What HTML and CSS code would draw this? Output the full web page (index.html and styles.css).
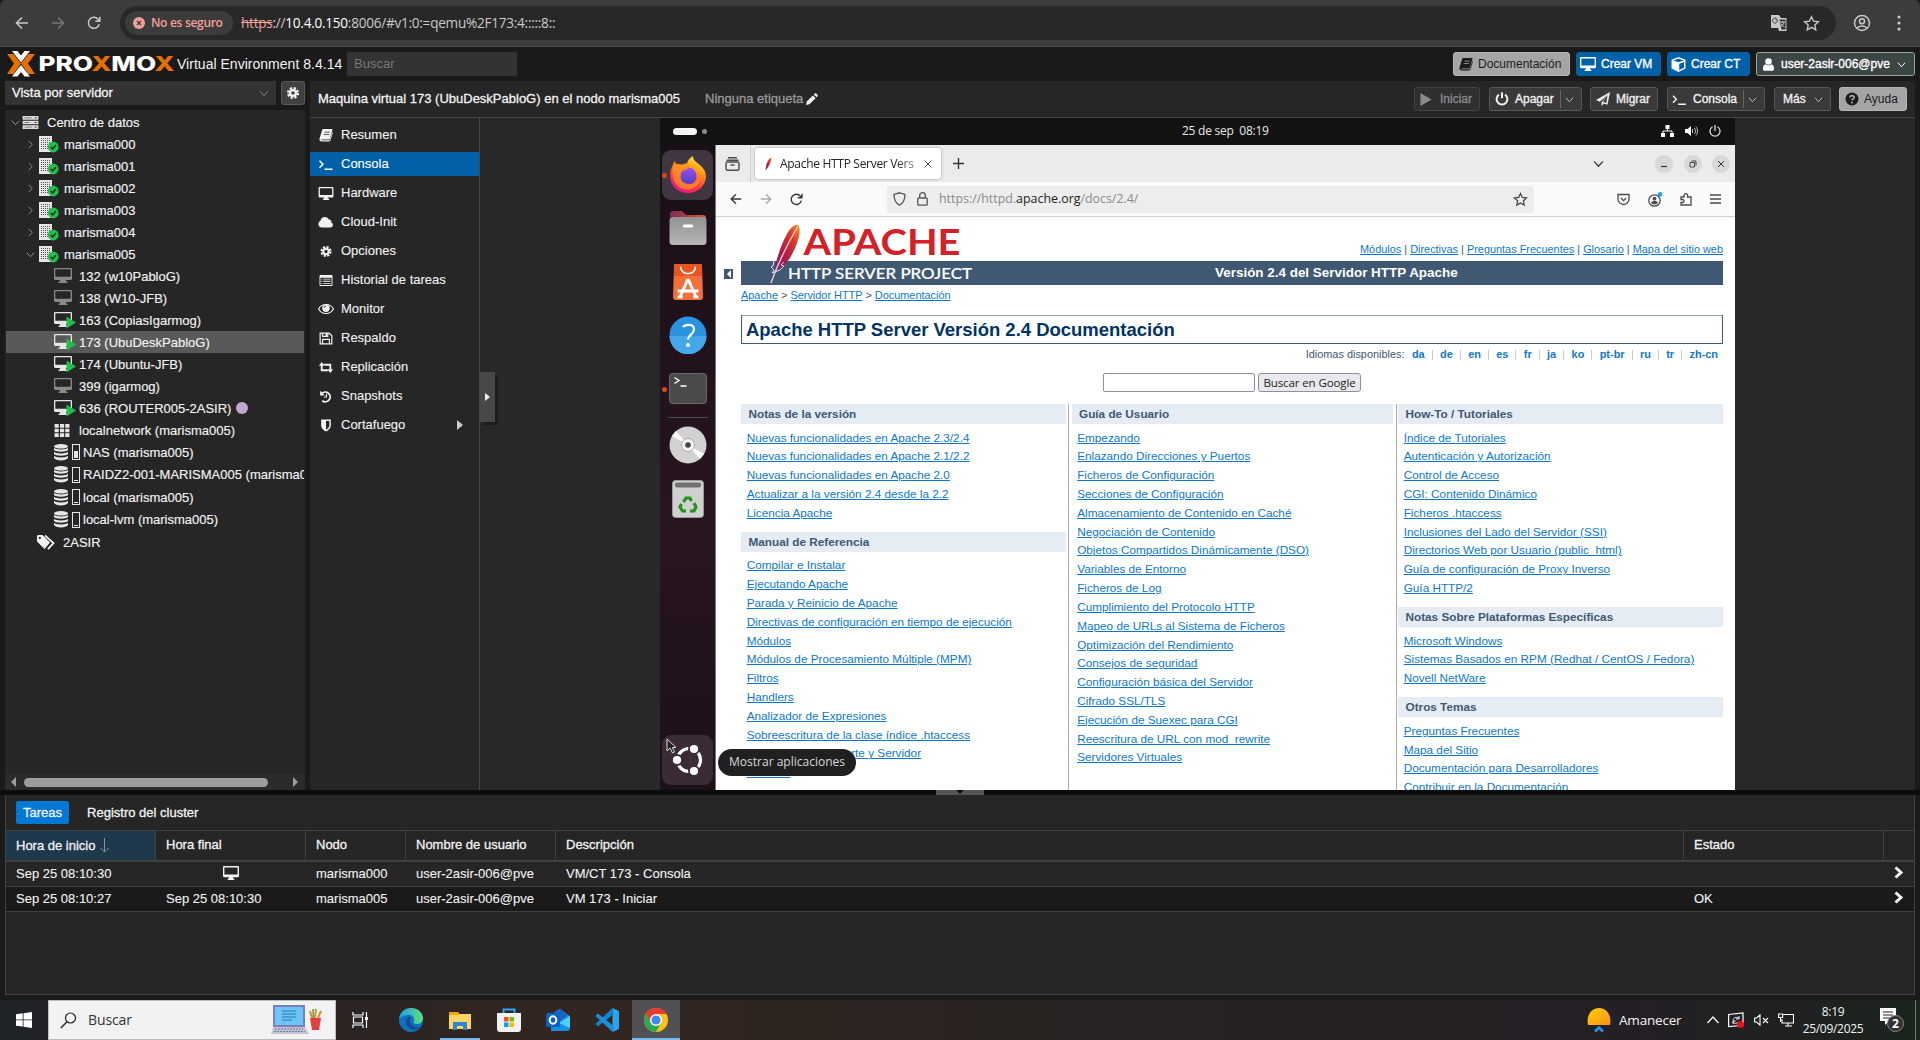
FILE: index.html
```html
<!DOCTYPE html>
<html lang="es">
<head>
<meta charset="utf-8">
<title>Proxmox Virtual Environment</title>
<link rel="stylesheet" href="styles.css">
</head>
<body>
<svg class="defs" width="0" height="0">
  <defs>
    <linearGradient id="gFox" x1="0.8" y1="0" x2="0.3" y2="1"><stop offset="0" stop-color="#fff44f"/><stop offset=".35" stop-color="#ff980e"/><stop offset=".7" stop-color="#ff3647"/><stop offset="1" stop-color="#e31587"/></linearGradient>
    <linearGradient id="gGlobe" x1="0" y1="0" x2="0" y2="1"><stop offset="0" stop-color="#a04bf0"/><stop offset="1" stop-color="#4b3fc0"/></linearGradient>
    <linearGradient id="gFolder" x1="0" y1="0" x2="1" y2="0"><stop offset="0" stop-color="#7a2a58"/><stop offset="1" stop-color="#e2572b"/></linearGradient>
    <linearGradient id="gGrey" x1="0" y1="0" x2="0" y2="1"><stop offset="0" stop-color="#929292"/><stop offset="1" stop-color="#b6b6b6"/></linearGradient>
    <linearGradient id="gFeather" x1="1" y1="0" x2="0" y2="1"><stop offset="0" stop-color="#f79a23"/><stop offset=".3" stop-color="#d9382b"/><stop offset=".65" stop-color="#b01a44"/><stop offset="1" stop-color="#6d2a7f"/></linearGradient>
    <linearGradient id="gSun" x1="0" y1="0" x2="1" y2="1"><stop offset="0" stop-color="#ffd000"/><stop offset="1" stop-color="#f7921e"/></linearGradient>
    <linearGradient id="gEdge" x1="0" y1="0" x2="1" y2="0"><stop offset="0" stop-color="#1e9be8"/><stop offset="1" stop-color="#5fe07a"/></linearGradient>
  </defs>
  <symbol id="back" viewBox="0 0 16 16"><path d="M14 8H3M8 2.5 2.5 8 8 13.5" fill="none" stroke="currentColor" stroke-width="1.6"/></symbol>
  <symbol id="fwd" viewBox="0 0 16 16"><path d="M2 8h11M8 2.5 13.5 8 8 13.5" fill="none" stroke="currentColor" stroke-width="1.6"/></symbol>
  <symbol id="reload" viewBox="0 0 16 16"><path d="M13.2 9.2A5.5 5.5 0 1 1 12 4.2l1.5 1.6M13.8 1.8v4.4H9.4" fill="none" stroke="currentColor" stroke-width="1.5"/></symbol>
  <symbol id="star" viewBox="0 0 16 16"><path d="m8 1.6 1.9 4.2 4.6.5-3.4 3.1.9 4.5L8 11.600l-4 2.300.9-4.500L1.500 6.300l4.600-.5z" fill="none" stroke="currentColor" stroke-width="1.300"/></symbol>
  <symbol id="chev" viewBox="0 0 10 10"><path d="m1 3 4 4.500L9 3" fill="none" stroke="currentColor" stroke-width="1.100"/></symbol>
  <symbol id="chevr" viewBox="0 0 10 10"><path d="m3 1 4 4-4 4" fill="none" stroke="currentColor" stroke-width="1"/></symbol>
  <symbol id="gear" viewBox="0 0 14 14"><path d="M7 2.900a4.100 4.100 0 1 0 0 8.200 4.100 4.100 0 0 0 0-8.200zm0 2.300a1.800 1.800 0 1 1 0 3.600 1.800 1.800 0 0 1 0-3.600z" fill="currentColor" fill-rule="evenodd"/><circle cx="7" cy="7" r="4.900" fill="none" stroke="currentColor" stroke-width="2.200" stroke-dasharray="2.300 1.548"/></symbol>
  <symbol id="book" viewBox="0 0 14 14"><path d="M4.300 1h8.500c.5 0 .8.500.6 1L11 10.500c-.2.600-.6.900-1.200.9H2.500c-.4 0-.3.900.2.900h7.600c.3 0 .5-.1.600-.4l2.400-7.800c.5.300.5.700.4 1.100l-2.200 7.100c-.2.700-.8 1.100-1.500 1.100H2.300C1 13.400 0 12 .5 10.800L3 2.200C3.200 1.400 3.600 1 4.300 1zm1.300 2.700-.3.900h5.500l.3-.9zm-.7 2.200-.3.900h5.500l.3-.9z" fill="currentColor" fill-rule="evenodd"/></symbol>
  <symbol id="term" viewBox="0 0 16 14"><path d="m1 3 3.600 3.700L1 10.400M6.500 12H15" fill="none" stroke="currentColor" stroke-width="1.600"/></symbol>
  <symbol id="desk" viewBox="0 0 16 14"><path d="M1.200 0h13.600C15.500 0 16 .5 16 1.200v8.900c0 .7-.5 1.200-1.200 1.200H10v1.200h1.300V14H4.700v-1.500H6v-1.200H1.200C.5 11.300 0 10.800 0 10.100V1.200C0 .5.500 0 1.200 0zM1.400 1.400v7.200h13.200V1.400z" fill="currentColor" fill-rule="evenodd"/></symbol>
  <symbol id="cloud" viewBox="0 0 16 14"><path d="M4 12.500a3.500 3.500 0 0 1-1.500-6.700A4.500 4.500 0 0 1 11 4.500c2 0 2.600 1.500 2.300 2.900A2.700 2.700 0 0 1 13 12.500z" fill="currentColor"/></symbol>
  <symbol id="list" viewBox="0 0 14 14"><path d="M1.200 1h11.600c.7 0 1.200.5 1.200 1.200v9.600c0 .7-.5 1.200-1.200 1.200H1.200C.5 13 0 12.500 0 11.800V2.200C0 1.500.5 1 1.200 1zM1 4v7.900h12V4zm1 1h1v1H2zm2 0h8v1H4zM2 7.300h1v1H2zm2 0h8v1H4zM2 9.600h1v1H2zm2 0h8v1H4z" fill="currentColor" fill-rule="evenodd"/></symbol>
  <symbol id="eye" viewBox="0 0 16 12"><path d="M.5 6C2 3.300 4.800 1.500 8 1.500S14 3.300 15.500 6C14 8.700 11.200 10.500 8 10.500S2 8.700.5 6z" fill="none" stroke="currentColor" stroke-width="1.200"/><circle cx="8" cy="5.300" r="3.700" fill="currentColor"/><path d="M6 5a2 2 0 0 1 2-2" fill="none" stroke="#262626" stroke-width=".8"/></symbol>
  <symbol id="save" viewBox="0 0 14 14"><path d="M.7 1.200v11.600h12.600V4L10.500 1.200zM3.300 1.200v3.600H9V1.200M3.300 12.800V8h7.400v4.800" fill="none" stroke="currentColor" stroke-width="1.300"/><path d="M6.500 1.500h1.800v2.800H6.500z" fill="currentColor"/></symbol>
  <symbol id="retweet" viewBox="0 0 16 12"><path d="M3.300 0 6.400 4H4.300v4h5l1.600 2H2.300V4H.2zM12.700 12l3.100-4h-2.100V2H5.100l1.600 2h5v4H9.600z" fill="currentColor"/></symbol>
  <symbol id="undo" viewBox="0 0 14 14"><path d="M2.500 3.800A5.200 5.200 0 1 1 3 11.500" fill="none" stroke="currentColor" stroke-width="2"/><path d="M.7.800v5h5z" fill="currentColor"/><path d="M7.500 4v3.500H5" fill="none" stroke="currentColor" stroke-width="1.200"/></symbol>
  <symbol id="shield" viewBox="0 0 12 14"><path d="M.8.500h10.400V7c0 3.200-2.600 5-5.200 6.500C3.400 12 .8 10.200.8 7zM6 2.200v9.300c2-1.300 3.600-2.600 3.600-4.500V2.200z" fill="currentColor" fill-rule="evenodd"/></symbol>
  <symbol id="play" viewBox="0 0 12 14"><path d="M0 0v14l12-7z" fill="currentColor"/></symbol>
  <symbol id="power" viewBox="0 0 14 14"><path d="M4 2.600a5.400 5.400 0 1 0 6 0M7 .3v6" fill="none" stroke="currentColor" stroke-width="2"/></symbol>
  <symbol id="plane" viewBox="0 0 14 14"><path d="M14 0 0 8l3.800 1.800L12 2.500 5.500 10.500V14l2.300-2.500 3.700 1.300zM11.500 3.500 10.300 11 7 9.700z" fill="currentColor" fill-rule="evenodd"/></symbol>
  <symbol id="quest" viewBox="0 0 14 14"><circle cx="7" cy="7" r="6.500" fill="currentColor"/><path d="M5 5.500c0-2.700 4.200-2.500 4.200-.2C9.200 7 7 6.800 7 8.600M7 9.800v1.700" fill="none" stroke="#a5a5a5" stroke-width="1.700"/></symbol>
  <symbol id="cube" viewBox="0 0 14 14"><path d="m7 0 6.500 2.500v8.300L7 14 .5 10.800V2.500zm0 1.300L2.200 3.200 7 5l4.800-1.800zm.7 5v5.900l4.500-2.200V4.600z" fill="currentColor" fill-rule="evenodd"/></symbol>
  <symbol id="user" viewBox="0 0 12 14"><circle cx="6" cy="3.800" r="3.600" fill="currentColor"/><path d="M0 11.500C0 8.500 1.200 7 2.700 6.600c2 1.800 4.600 1.800 6.600 0C10.800 7 12 8.500 12 11.500c0 1.500-.8 2.300-2 2.300H2c-1.200 0-2-.8-2-2.300z" fill="currentColor"/></symbol>
  <symbol id="server" viewBox="0 0 17 14"><path d="M0 0h17v4H0zM0 5h17v4H0zM0 10h17v4H0z" fill="#dcdcdc"/><path d="M2 2h8M2 7h5M2 12h8" stroke="#777" stroke-width="1"/><path d="M13 2h2M13 7h2M13 12h2" stroke="#222" stroke-width="1"/></symbol>
  <symbol id="node" viewBox="0 0 20 17"><path d="M0 0h13v16H0z" fill="#e6e6e6"/><path d="M2.500 2v11M4.500 2v11M6.500 2v11M8.500 2v11M10.500 2v11" stroke="#555" stroke-width="1" stroke-dasharray="1 1"/><circle cx="14.200" cy="11" r="5.400" fill="#21bf4b"/><path d="m11.700 11 2 2 3.200-4" fill="none" stroke="#262626" stroke-width="1.500"/></symbol>
  <symbol id="vm" viewBox="0 0 22 16"><path d="M1.200 0h15.600C17.500 0 18 .5 18 1.200v9.600c0 .7-.5 1.200-1.200 1.200H12v1.500h1.500V15h-9v-1.500H6V12H1.200C.5 12 0 11.500 0 10.800V1.200C0 .5.500 0 1.200 0zM1.300 1.300v7.500h15.400V1.300z" fill="currentColor" fill-rule="evenodd"/></symbol>
  <symbol id="vmrun" viewBox="0 0 22 17"><use href="#vm" width="22" height="16"/><path d="M12.500 4.500v12L22 10.500z" fill="#21bf4b"/></symbol>
  <symbol id="grid" viewBox="0 0 16 14"><path d="M0 0h4.500v4H0zM5.800 0h4.500v4H5.800zM11.500 0H16v4h-4.500zM0 5h4.500v4H0zM5.800 5h4.500v4H5.800zM11.500 5H16v4h-4.500zM0 10h4.500v4H0zM5.800 10h4.500v4H5.800zM11.500 10H16v4h-4.500z" fill="currentColor"/></symbol>
  <symbol id="db" viewBox="0 0 14 17"><g fill="currentColor"><ellipse cx="7" cy="2.300" rx="7" ry="2.300"/><path d="M0 3.700c1.500 2.300 12.500 2.300 14 0v2.200c-1.500 2.300-12.500 2.300-14 0zM0 7.700c1.500 2.300 12.500 2.300 14 0v2.200c-1.500 2.300-12.500 2.300-14 0zM0 11.700c1.500 2.300 12.500 2.300 14 0v2.400c-1.500 3.300-12.500 3.300-14 0z"/></g></symbol>
  <symbol id="tags" viewBox="0 0 18 15"><path d="M1 0h4.500L13 7.500 7.500 14 0 6.500V1zM2.800 1.800a1.100 1.100 0 1 0 .1 0z" fill="currentColor" fill-rule="evenodd"/><path d="M8 .5 16.500 8l-5.500 6.200" fill="none" stroke="currentColor" stroke-width="1.800"/></symbol>
  <symbol id="pencil" viewBox="0 0 14 14"><path d="m0 14 .8-4L8 2.800 11.200 6 4 13.200zM9 1.800 10.300.6c.5-.5 1.100-.5 1.600 0l1.500 1.500c.5.500.5 1.100 0 1.600L12.200 5z" fill="currentColor"/></symbol>
  <symbol id="more" viewBox="0 0 10 14"><path d="m1.500 1.500 5.500 5-5.500 5" fill="none" stroke="currentColor" stroke-width="3"/></symbol>
</svg>

<header class="chrome">
  <svg class="nav nav-back"><use href="#back"/></svg>
  <svg class="nav nav-fwd"><use href="#fwd"/></svg>
  <svg class="nav nav-reload"><use href="#reload"/></svg>
  <div class="omnibox">
    <span class="unsafe"><svg viewBox="0 0 12 12" width="12" height="12"><circle cx="6" cy="6" r="6" fill="#f0a199"/><path d="m4 4 4 4M8 4 4 8" stroke="#3c3c3c" stroke-width="1.400"/></svg><b>No es seguro</b></span>
    <span class="url"><s>https</s>://<em>10.4.0.150</em>:8006/#v1:0:=qemu%2F173:4:::::8::</span>
    <svg class="translate" viewBox="0 0 18 18" width="18" height="18"><path d="M1 1h8l2 3h5.500v13H9l-1-3H1z" fill="#c8c8c8"/><path d="M9.500 5.500h6v10h-4z" fill="#333"/><path d="M7.500 6H5.500M7.500 6.500a2.500 2.500 0 1 1-.8-1.800" fill="none" stroke="#333" stroke-width="1"/><path d="M10 8h5M12.500 7v1.500M11 9.500c1 2 2 3 3.500 3.500M14 8.500c-.5 2-2 3.500-3 4" fill="none" stroke="#ddd" stroke-width=".9"/></svg>
    <svg class="bookmark"><use href="#star"/></svg>
  </div>
  <svg class="profile" viewBox="0 0 18 18" width="18" height="18" fill="none" stroke="#c8c8c8" stroke-width="1.500"><circle cx="9" cy="9" r="7.500"/><circle cx="9" cy="7.300" r="2.500"/><path d="M4 14.200c2-3 8-3 10 0"/></svg>
  <svg viewBox="0 0 4 16" width="4" height="16" fill="#d0d0d0"><circle cx="2" cy="2" r="1.500"/><circle cx="2" cy="8" r="1.500"/><circle cx="2" cy="14" r="1.500"/></svg>
</header>

<div class="pve">
  <div class="topbar">
    <svg class="logo" width="168" height="28" viewBox="0 0 168 28">
      <path d="M1 4h6.500L15 13.500 7.500 24H1l7-10.500z" fill="#e57000"/><path d="M29 4h-6.500L15 13.500l7.500 10.500H29l-7-10.500z" fill="#e57000"/>
      <path d="M6 1h5.500l3.500 4.500L18.500 1H24l-9 11.500zM6 26.500h5.500L15 22l3.500 4.500H24L15 15z" fill="#fff"/>
      <text x="32.500" y="20.500" textLength="136" lengthAdjust="spacingAndGlyphs" class="brand">PRO<tspan class="or">X</tspan>MO<tspan class="or">X</tspan></text>
    </svg>
    <span class="version">Virtual Environment 8.4.14</span>
    <span class="search">Buscar</span>
    <span class="grow"></span>
    <div class="topbtns">
      <span class="btn light w117"><svg width="14" height="14"><use href="#book"/></svg>Documentación</span>
      <span class="btn blue w85"><svg width="16" height="14"><use href="#desk"/></svg>Crear VM</span>
      <span class="btn blue w83"><svg width="15" height="15"><use href="#cube"/></svg>Crear CT</span>
      <span class="btn userb"><svg width="11" height="13"><use href="#user"/></svg>user-2asir-006@pve<svg width="9" height="9"><use href="#chev"/></svg></span>
    </div>
  </div>

  <div class="main">
    <aside class="left">
      <div class="viewrow"><span class="combo">Vista por servidor<svg width="10" height="10"><use href="#chev"/></svg></span><span class="gearbtn"><svg width="14" height="14"><use href="#gear"/></svg></span></div>
      <div class="tree">
        <div class="tr l0"><svg class="ar" width="9" height="9"><use href="#chev"/></svg><svg width="17" height="13"><use href="#server"/></svg><span>Centro de datos</span></div>
        <div class="tr l1"><svg class="ar" width="9" height="9"><use href="#chevr"/></svg><svg width="20" height="17"><use href="#node"/></svg><span>marisma000</span></div>
        <div class="tr l1"><svg class="ar" width="9" height="9"><use href="#chevr"/></svg><svg width="20" height="17"><use href="#node"/></svg><span>marisma001</span></div>
        <div class="tr l1"><svg class="ar" width="9" height="9"><use href="#chevr"/></svg><svg width="20" height="17"><use href="#node"/></svg><span>marisma002</span></div>
        <div class="tr l1"><svg class="ar" width="9" height="9"><use href="#chevr"/></svg><svg width="20" height="17"><use href="#node"/></svg><span>marisma003</span></div>
        <div class="tr l1"><svg class="ar" width="9" height="9"><use href="#chevr"/></svg><svg width="20" height="17"><use href="#node"/></svg><span>marisma004</span></div>
        <div class="tr l1"><svg class="ar" width="9" height="9"><use href="#chev"/></svg><svg width="20" height="17"><use href="#node"/></svg><span>marisma005</span></div>
        <div class="tr l2"><svg class="off" width="22" height="16"><use href="#vm"/></svg><span>132 (w10PabloG)</span></div>
        <div class="tr l2"><svg class="off" width="22" height="16"><use href="#vm"/></svg><span>138 (W10-JFB)</span></div>
        <div class="tr l2"><svg width="22" height="17"><use href="#vmrun"/></svg><span>163 (CopiasIgarmog)</span></div>
        <div class="tr l2 sel"><svg width="22" height="17"><use href="#vmrun"/></svg><span>173 (UbuDeskPabloG)</span></div>
        <div class="tr l2"><svg width="22" height="17"><use href="#vmrun"/></svg><span>174 (Ubuntu-JFB)</span></div>
        <div class="tr l2"><svg class="off" width="22" height="16"><use href="#vm"/></svg><span>399 (igarmog)</span></div>
        <div class="tr l2"><svg width="22" height="17"><use href="#vmrun"/></svg><span>636 (ROUTER005-2ASIR)</span><i class="tag"></i></div>
        <div class="tr l2"><svg class="net" width="16" height="13"><use href="#grid"/></svg><span>localnetwork (marisma005)</span></div>
        <div class="tr l2 st"><svg width="14" height="17"><use href="#db"/></svg><i class="usage half"></i><span>NAS (marisma005)</span></div>
        <div class="tr l2 st"><svg width="14" height="17"><use href="#db"/></svg><i class="usage"></i><span>RAIDZ2-001-MARISMA005 (marisma005)</span></div>
        <div class="tr l2 st"><svg width="14" height="17"><use href="#db"/></svg><i class="usage"></i><span>local (marisma005)</span></div>
        <div class="tr l2 st"><svg width="14" height="17"><use href="#db"/></svg><i class="usage"></i><span>local-lvm (marisma005)</span></div>
        <div class="tr pool"><svg width="18" height="15"><use href="#tags"/></svg><span>2ASIR</span></div>
        <div class="hscroll"><i class="sl"></i><i class="thumb"></i><i class="sr"></i></div>
      </div>
    </aside>

    <section class="content">
      <div class="titlebar">
        <span class="ttl">Maquina virtual 173 (UbuDeskPabloG) en el nodo marisma005</span>
        <span class="notag">Ninguna etiqueta<svg width="12" height="12"><use href="#pencil"/></svg></span>
        <span class="grow"></span>
        <div class="actions">
          <span class="btn dark dis w66 g9"><svg width="12" height="13"><use href="#play"/></svg>Iniciar</span>
          <span class="btn dark w93 g8"><svg width="14" height="14"><use href="#power"/></svg>Apagar<i class="vs"></i><svg class="dd" width="9" height="9"><use href="#chev"/></svg></span>
          <span class="btn dark w68 g9"><svg width="14" height="14"><use href="#plane"/></svg>Migrar</span>
          <span class="btn dark w98 g9"><svg width="15" height="13"><use href="#term"/></svg>Consola<i class="vs"></i><svg class="dd" width="9" height="9"><use href="#chev"/></svg></span>
          <span class="btn dark w57 g8">Más<svg class="dd" width="9" height="9"><use href="#chev"/></svg></span>
          <span class="btn light w68"><svg width="14" height="14"><use href="#quest"/></svg>Ayuda</span>
        </div>
      </div>
      <div class="body">
        <nav class="side">
          <a><svg width="14" height="14"><use href="#book"/></svg>Resumen</a>
          <a class="on"><svg width="15" height="13"><use href="#term"/></svg>Consola</a>
          <a><svg width="16" height="13"><use href="#desk"/></svg>Hardware</a>
          <a><svg width="16" height="14"><use href="#cloud"/></svg>Cloud-Init</a>
          <a><svg width="13" height="13"><use href="#gear"/></svg>Opciones</a>
          <a><svg width="14" height="13"><use href="#list"/></svg>Historial de tareas</a>
          <a><svg width="15" height="12"><use href="#eye"/></svg>Monitor</a>
          <a><svg width="13" height="13"><use href="#save"/></svg>Respaldo</a>
          <a><svg width="16" height="11"><use href="#retweet"/></svg>Replicación</a>
          <a><svg width="13" height="13"><use href="#undo"/></svg>Snapshots</a>
          <a><svg width="12" height="13"><use href="#shield"/></svg>Cortafuego<i class="sub"></i></a>
        </nav>
        <div class="console">
          <div class="handle"><i></i></div>
          <div class="vm">
            <div class="gnome"><i class="ws"></i><i class="ws2"></i><span class="clock">25 de sep&nbsp; 08:19</span>
              <span class="sys">
                <svg width="13" height="12" viewBox="0 0 13 12"><path d="M4.500 0h4v4h-4zM0 8h4v4H0zM9 8h4v4H9z" fill="#fff"/><path d="M6.500 4v2M2 8V6h9v2" fill="none" stroke="#fff"/></svg>
                <svg width="13" height="12" viewBox="0 0 13 12"><path d="M0 4h2.500L6 1v10L2.500 8H0z" fill="#fff"/><path d="M7.500 4v4M9.500 3c1.300 2 1.300 4 0 6M11 1.500c2 3 2 6 0 9" fill="none" stroke="#bbb"/></svg>
                <svg width="12" height="12" viewBox="0 0 12 12"><path d="M3.500 1.800a5 5 0 1 0 5 0M6 0v6" fill="none" stroke="#ddd" stroke-width="1.300"/></svg>
              </span>
            </div>
            <div class="desktop">
              <div class="dock">
                <div class="app active"><i class="run"></i><svg width="38" height="38" viewBox="0 0 38 38"><path d="M19 37C9 37 1 30 1 19c0-4 1-7 3-10 0-2 1-3 2-4 0 2 1 3 2 3l5 .500c2-1 4-1.200 5-1C18.500 4 21 2 24 0c0 4 2 5 5 7.500C33 11 37 14 37 21 36 31 28 37 19 37z" fill="url(#gFox)"/><circle cx="19" cy="20" r="8.500" fill="url(#gGlobe)"/><path d="M4 9c2-1 5-1 9 .5 2 1 4 0 6 1 1 2-1 3.500-4 4-2 1-3 1.500-3 4-2 7 5 11 12 9 4-1 6-5 6-9 3 8-3 15-11 15C9 34 1 25 4 9z" fill="#ff9a1e" opacity=".7"/></svg></div>
                <div class="app"><svg width="38" height="34" viewBox="0 0 38 34"><path d="M1 3c0-2 1-3 3-3h9l4 4h17c2 0 3 1 3 3v8H1z" fill="url(#gFolder)"/><rect x=".5" y="6" width="37" height="28" rx="3.500" fill="url(#gGrey)"/><rect x="14" y="13.500" width="10" height="3" rx="1" fill="#fff"/></svg></div>
                <div class="app"><svg width="30" height="36" viewBox="0 0 30 36"><path d="M3 0h24c1.500 0 2 .5 2 2l1 31c0 2-1 3-3 3H3c-2 0-3-1-3-3L1 2c0-1.500.5-2 2-2z" fill="#f4703a"/><path d="M1 0h28v12H1z" fill="#e95420"/><path d="M7.500 2.500c0 9.500 15 9.500 15 0" fill="none" stroke="#fff" stroke-width="1.600"/><path d="M15 15 7 33M15 15l8 18M4.500 27h21" fill="none" stroke="#fff" stroke-width="3"/><path d="M4.500 33h5M20.500 33h5" stroke="#fff" stroke-width="2.500"/></svg></div>
                <div class="app"><svg width="38" height="38" viewBox="0 0 38 38"><circle cx="19" cy="19" r="18.500" fill="#2a93df"/><path d="M.5 20h37a18.500 18.500 0 0 1-37 0z" fill="#43a8ea"/><path d="M14 11c2-3 11-3.500 11 2.500 0 5-6 5-6 10" fill="none" stroke="#fff" stroke-width="2.300"/><circle cx="19" cy="29" r="2" fill="#fff"/></svg></div>
                <div class="app"><i class="run"></i><svg width="38" height="31" viewBox="0 0 38 31"><rect x=".5" y=".5" width="37" height="30" rx="3" fill="#4a4a4a" stroke="#6a6a6a"/><path d="m5.500 4.500 4.500 3-4.500 3M11.500 13h6" fill="none" stroke="#fff" stroke-width="1.400"/></svg></div>
                <i class="dsep"></i>
                <div class="app"><svg width="38" height="38" viewBox="0 0 38 38"><circle cx="19" cy="19" r="18.500" fill="#d2d2d2"/><path d="M19 19 3 10l4-5zM19 19l16 9-4 5z" fill="#fff"/><circle cx="19" cy="19" r="6.500" fill="#f4f4f4" stroke="#b5a88d"/><circle cx="19" cy="19" r="2.800" fill="#444"/></svg></div>
                <div class="app"><svg width="32" height="38" viewBox="0 0 32 38"><rect x=".5" y=".5" width="31" height="37" rx="3" fill="#d0d0d0" stroke="#999"/><rect x="3" y="2.500" width="26" height="5" rx="2" fill="#707070"/><g fill="none" stroke="#26921d" stroke-width="3.200"><path d="m11.500 22 2.500-4h4l1.500 3"/><path d="m22 23 2 4-2 4h-4"/><path d="M14 31h-3.500L8 27l1.500-3"/></g></svg></div>
                <div class="app ubuntu"><svg width="32" height="34" viewBox="0 0 32 34"><circle cx="17" cy="17" r="11.500" fill="none" stroke="#fff" stroke-width="3.200"/><g fill="#fff" stroke="#3a2b35" stroke-width="1.800"><circle cx="5" cy="17" r="5"/><circle cx="22" cy="6" r="5"/><circle cx="22" cy="28" r="5"/></g></svg></div>
                <svg class="cursor" width="11" height="16" viewBox="0 0 11 16"><path d="M1 1v12l3-3 2.500 5 2-1L6.300 9.500H10z" fill="#222" stroke="#ddd" stroke-width="1"/></svg>
              </div>
              <div class="ff">
                <div class="tabs">
                  <span class="fview"><svg width="15" height="14" viewBox="0 0 15 14" fill="none" stroke="#4a4a4f" stroke-width="1.400"><path d="M3 .7h9M1.500 3.200h12"/><rect x="1" y="5" width="13" height="8.300" rx="1.500"/><path d="M5.500 8h4"/></svg></span>
                  <span class="tab"><svg width="7" height="14" viewBox="0 0 7 14"><path d="M6.500 0C2 3 1 8 .5 13.500 4 10 6 5 6.500 0z" fill="url(#gFeather)"/></svg><span class="tabt">Apache HTTP Server Vers</span><svg width="8" height="8" viewBox="0 0 8 8"><path d="m.5.500 7 7M7.500.500l-7 7" stroke="#444"/></svg></span>
                  <svg class="plus" width="11" height="11" viewBox="0 0 11 11"><path d="M5.500 0v11M0 5.500h11" stroke="#333" stroke-width="1.400"/></svg>
                  <span class="grow"></span>
                  <svg class="tabdd" width="11" height="11"><use href="#chev"/></svg>
                  <i class="wb"><svg width="8" height="8"><path d="M1 6.500h6" stroke="#333" stroke-width="1.200"/></svg></i><i class="wb"><svg width="8" height="8"><path d="M1 2.500h4.500V7H1zM2.500 1H7v4.500" fill="none" stroke="#444"/></svg></i><i class="wb"><svg width="8" height="8"><path d="m1 1 6 6M7 1 1 7" stroke="#333"/></svg></i>
                </div>
                <div class="tools">
                  <svg class="t1" width="14" height="14"><use href="#back"/></svg><svg class="t2" width="14" height="14"><use href="#fwd"/></svg><svg class="t3" width="15" height="15"><use href="#reload"/></svg>
                  <div class="furl"><svg width="13" height="14" viewBox="0 0 13 14"><path d="M6.500.8 12 2.500C12 8 10.500 11 6.500 13.200 2.500 11 1 8 1 2.500z" fill="none" stroke="#555" stroke-width="1.300"/></svg><svg width="11" height="14" viewBox="0 0 11 14" fill="none" stroke="#555" stroke-width="1.300"><rect x=".8" y="6" width="9.400" height="7.200" rx="1"/><path d="M2.700 6V3.500a2.800 2.800 0 0 1 5.600 0V6"/></svg><span>https://httpd.<em>apache.org</em>/docs/2.4/</span><span class="grow"></span><svg class="fst" width="15" height="15"><use href="#star"/></svg></div>
                  <span class="grow"></span>
                  <span class="tr4"><svg width="13" height="13" viewBox="0 0 13 13" fill="none" stroke="#4a4a4f" stroke-width="1.300"><path d="M1 1.500h11V6a5.500 5.500 0 0 1-11 0zM3.800 5l2.700 2.600L9.200 5"/></svg><svg width="14" height="15" viewBox="0 0 14 15"><circle cx="6.500" cy="8.500" r="5.700" fill="none" stroke="#4a4a4f" stroke-width="1.300"/><circle cx="6.500" cy="6.700" r="1.900" fill="#4a4a4f"/><path d="M3 10.500c1.500-2 5.500-2 7 0-1.500 2.500-5.500 2.500-7 0z" fill="#4a4a4f"/><circle cx="12" cy="2.300" r="2.300" fill="#0aa8f5"/></svg><svg width="12" height="14" viewBox="0 0 12 14"><path d="M1 5h3V3.500a1.800 1.800 0 0 1 3.600 0V5H11v8H1v-2.500h1.500a1.500 1.500 0 0 0 0-3H1z" fill="none" stroke="#4a4a4f" stroke-width="1.300"/></svg><svg width="11" height="10" viewBox="0 0 11 10"><path d="M0 1h11M0 5h11M0 9h11" stroke="#4a4a4f" stroke-width="1.300"/></svg></span>
                </div>
                <div class="page">
                  <i class="toggle"><b></b></i>
                  <div class="doc">
                    <div class="mods"><a>Módulos</a> | <a>Directivas</a> | <a>Preguntas Frecuentes</a> | <a>Glosario</a> | <a>Mapa del sitio web</a></div>
                    <div class="band">Versión 2.4 del Servidor HTTP Apache</div>
                    <svg class="alogo" width="240" height="62" viewBox="0 0 240 62">
                      <text class="ap1" x="33.500" y="32" textLength="157" lengthAdjust="spacingAndGlyphs">APACHE</text>
                      <text class="ap2" x="18" y="56" textLength="184" lengthAdjust="spacingAndGlyphs">HTTP SERVER PROJECT</text>
                      <path d="M28 2c-3-1-8 3-11 9C12 20 7 34 5 44l2 2h4c8-8 14-18 18-32 1-5 1-10-1-12z" fill="url(#gFeather)"/>
                      <path d="M28 3C18 20 8 40 1 60" fill="none" stroke="#f3ccd3" stroke-width="1.400"/>
                      <path d="m4 38-1 5-2 1 3 3-2 3 8-3 4-4-3-1 3-3" fill="none" stroke="#e9dcea" stroke-width="1"/>
                    </svg>
                    <div class="crumbs"><a>Apache</a> &gt; <a>Servidor HTTP</a> &gt; <a>Documentación</a></div>
                    <h1>Apache HTTP Server Versión 2.4 Documentación</h1>
                    <div class="langs">Idiomas disponibles: <b>da</b><i></i><b>de</b><i></i><b>en</b><i></i><b>es</b><i></i><b>fr</b><i></i><b>ja</b><i></i><b>ko</b><i></i><b>pt-br</b><i></i><b>ru</b><i></i><b>tr</b><i></i><b>zh-cn</b></div>
                    <div class="goog"><span class="gin"></span><span class="gbt">Buscar en Google</span></div>
                    <div class="cols">
                      <div class="col">
                        <h2>Notas de la versión</h2>
                        <ul><li><a>Nuevas funcionalidades en Apache 2.3/2.4</a></li><li><a>Nuevas funcionalidades en Apache 2.1/2.2</a></li><li><a>Nuevas funcionalidades en Apache 2.0</a></li><li><a>Actualizar a la versión 2.4 desde la 2.2</a></li><li><a>Licencia Apache</a></li></ul>
                        <h2>Manual de Referencia</h2>
                        <ul><li><a>Compilar e Instalar</a></li><li><a>Ejecutando Apache</a></li><li><a>Parada y Reinicio de Apache</a></li><li><a>Directivas de configuración en tiempo de ejecución</a></li><li><a>Módulos</a></li><li><a>Módulos de Procesamiento Múltiple (MPM)</a></li><li><a>Filtros</a></li><li><a>Handlers</a></li><li><a>Analizador de Expresiones</a></li><li><a>Sobreescritura de la clase índice .htaccess</a></li><li><a>Programas de Soporte y Servidor</a></li><li><a>Glosario</a></li></ul>
                      </div>
                      <div class="col mid">
                        <h2>Guía de Usuario</h2>
                        <ul><li><a>Empezando</a></li><li><a>Enlazando Direcciones y Puertos</a></li><li><a>Ficheros de Configuración</a></li><li><a>Secciones de Configuración</a></li><li><a>Almacenamiento de Contenido en Caché</a></li><li><a>Negociación de Contenido</a></li><li><a>Objetos Compartidos Dinámicamente (DSO)</a></li><li><a>Variables de Entorno</a></li><li><a>Ficheros de Log</a></li><li><a>Cumplimiento del Protocolo HTTP</a></li><li><a>Mapeo de URLs al Sistema de Ficheros</a></li><li><a>Optimización del Rendimiento</a></li><li><a>Consejos de seguridad</a></li><li><a>Configuración básica del Servidor</a></li><li><a>Cifrado SSL/TLS</a></li><li><a>Ejecución de Suexec para CGI</a></li><li><a>Reescritura de URL con mod_rewrite</a></li><li><a>Servidores Virtuales</a></li></ul>
                      </div>
                      <div class="col">
                        <h2>How-To / Tutoriales</h2>
                        <ul><li><a>Índice de Tutoriales</a></li><li><a>Autenticación y Autorización</a></li><li><a>Control de Acceso</a></li><li><a>CGI: Contenido Dinámico</a></li><li><a>Ficheros .htaccess</a></li><li><a>Inclusiones del Lado del Servidor (SSI)</a></li><li><a>Directorios Web por Usuario (public_html)</a></li><li><a>Guía de configuración de Proxy Inverso</a></li><li><a>Guía HTTP/2</a></li></ul>
                        <h2>Notas Sobre Plataformas Específicas</h2>
                        <ul><li><a>Microsoft Windows</a></li><li><a>Sistemas Basados en RPM (Redhat / CentOS / Fedora)</a></li><li><a>Novell NetWare</a></li></ul>
                        <h2>Otros Temas</h2>
                        <ul><li><a>Preguntas Frecuentes</a></li><li><a>Mapa del Sitio</a></li><li><a>Documentación para Desarrolladores</a></li><li><a>Contribuir en la Documentación</a></li></ul>
                      </div>
                    </div>
                  </div>
                  <div class="tip">Mostrar aplicaciones</div>
                </div>
              </div>
            </div>
          </div>
        </div>
      </div>
    </section>
  </div>

  <div class="split"><i class="grip"><b></b></i></div>

  <div class="log">
    <div class="ltabs"><span class="lt on">Tareas</span><span class="lt">Registro del cluster</span></div>
    <div class="lr head"><span class="sorted">Hora de inicio<svg width="9" height="15" viewBox="0 0 9 15"><path d="M4.500 0v14M.5 10l4 4 4-4" fill="none" stroke="#8a9299"/></svg></span><span>Hora final</span><span>Nodo</span><span>Nombre de usuario</span><span>Descripción</span><span>Estado</span><span></span></div>
    <div class="lr row"><span>Sep 25 08:10:30</span><span class="mon"><svg width="16" height="14"><use href="#desk"/></svg></span><span>marisma000</span><span>user-2asir-006@pve</span><span>VM/CT 173 - Consola</span><span></span><span class="go"><svg width="10" height="14"><use href="#more"/></svg></span></div>
    <div class="lr row alt"><span>Sep 25 08:10:27</span><span>Sep 25 08:10:30</span><span>marisma005</span><span>user-2asir-006@pve</span><span>VM 173 - Iniciar</span><span>OK</span><span class="go"><svg width="10" height="14"><use href="#more"/></svg></span></div>
  </div>
</div>

<footer class="taskbar">
  <span class="start"><svg width="16" height="16" viewBox="0 0 16 16"><path d="M0 2.300 6.700 1.300v6.200H0zM7.500 1.200 16 0v7.500H7.500zM0 8.300h6.700v6.300L0 13.700zM7.500 8.300H16V16l-8.500-1.200z" fill="#fff"/></svg></span>
  <span class="wsearch"><svg width="17" height="17" viewBox="0 0 17 17"><circle cx="10.500" cy="6" r="5" fill="none" stroke="#222" stroke-width="1.200"/><path d="M7 9.700.8 16" stroke="#222" stroke-width="1.300"/></svg><span>Buscar</span>
    <svg class="pic" width="52" height="32" viewBox="0 0 52 32"><path d="M2 1h32v22H2z" fill="#7c7fb4"/><path d="M4 3h28v18H4z" fill="#6cc5f8"/><path d="M11 7h14M11 10h14M11 13h14M11 16h10" stroke="#2b75b5"/><path d="M2 23h32l4 7H0z" fill="#c5c3d6"/><path d="M4 25h28M3 27.500h31" stroke="#77749c" stroke-dasharray="2 1"/><path d="M41 14 39 7M44 14l1-9M47 14l3-7" stroke="#d3902a" stroke-width="2"/><path d="M42.500 14 42 5" stroke="#48a048" stroke-width="1.500"/><path d="M39 14h11l-2 12h-7z" fill="#e2403a"/></svg>
  </span>
  <span class="ti tview"><svg width="17" height="16" viewBox="0 0 17 16" fill="none" stroke="#fff" stroke-width="1.200"><path d="M1 0v3h10V0M1 16v-3h10v3M1.500 5h9v6h-9zM14.500 0v5M14.500 8v8"/><path d="M13 5h3v3h-3z" fill="#fff" stroke="none"/></svg></span>
  <span class="ti"><svg width="24" height="24" viewBox="0 0 24 24"><circle cx="12" cy="12" r="12" fill="#1170bd"/><path d="M0 11C1 4 6 0 12 0c7 0 12 5 12 10 0 4-3 6-6.500 6-3 0-3.500-1.500-2.500-3C16 9 12 6 8 7c-3 .5-6 2-8 4z" fill="url(#gEdge)"/><path d="M9 9c-2 2-3 7 0 10 3 4 9 3 13 0-5 1-10-1-11-5-.5-2 0-4 1-5z" fill="#0b4d94"/></svg></span>
  <span class="ti w60 open"><svg width="22" height="19" viewBox="0 0 22 19"><path d="M0 1h9l1.500 2H22v15H0z" fill="#ffd567"/><path d="M0 1h9l1 3H0z" fill="#e8a60c"/><path d="M4 19v-8h14v8h-4v-4H8v4z" fill="#2f86d1"/></svg></span>
  <span class="ti"><svg width="24" height="24" viewBox="0 0 24 24"><path d="M6.500 6V1.500h11V6" fill="none" stroke="#23a9f2" stroke-width="2"/><path d="M0 5h24v16c0 2-1 3-3 3H3c-2 0-3-1-3-3z" fill="#f1f1f1"/><path d="M7 9h4.500v4.500H7z" fill="#f25022"/><path d="M12.500 9H17v4.500h-4.500z" fill="#7fba00"/><path d="M7 14.500h4.500V19H7z" fill="#00a4ef"/><path d="M12.500 14.500H17V19h-4.500z" fill="#ffb900"/></svg></span>
  <span class="ti"><svg width="24" height="24" viewBox="0 0 24 24"><path d="m5 7 9-6 10 7v12c0 2-1 3-3 3H5z" fill="#1590e0"/><path d="m8 4 6-3.500L22 7l-9 7z" fill="#1f64bd"/><path d="m13 15 11-7v12z" fill="#4fd0f8"/><rect y="5" width="14" height="14" rx="1.500" fill="#0a62c4"/><ellipse cx="7" cy="12" rx="3.300" ry="3.800" fill="none" stroke="#fff" stroke-width="2"/></svg></span>
  <span class="ti"><svg width="24" height="24" viewBox="0 0 24 24"><path d="M17.500 0 24 3v18l-6.500 3z" fill="#2aa4ee"/><path d="M17.500 0v7L3 18.500.5 16z" fill="#1583cc"/><path d="M.5 8 3 5.500 17.500 17v7z" fill="#1c8fdc"/></svg></span>
  <span class="ti active open"><svg width="24" height="24" viewBox="0 0 24 24"><circle cx="12" cy="12" r="12" fill="#fbc116"/><path d="M1.600 6A12 12 0 0 1 22.400 6H12l-5 9z" fill="#e33b2e"/><path d="M1.600 6A12 12 0 0 0 12 24l5-9H7z" fill="#2da94f"/><circle cx="12" cy="12" r="6" fill="#fff"/><circle cx="12" cy="12" r="4.600" fill="#4285f4"/></svg></span>
  <span class="grow"></span>
  <svg class="sun" width="24" height="25" viewBox="0 0 24 25"><path d="M1 17C-1 8 4 0 12 0s13 8 11 17z" fill="url(#gSun)"/><path d="m8 23.500 4-4 4 4" fill="none" stroke="#1f9be6" stroke-width="2.500"/></svg>
  <span class="wx">Amanecer</span>
  <span class="tray">
    <svg width="12" height="8" viewBox="0 0 12 8"><path d="m.5 7 5.500-6 5.500 6" fill="none" stroke="#fff" stroke-width="1.200"/></svg>
    <svg width="17" height="16" viewBox="0 0 17 16"><path d="M.6 2.500 15 .8v12.500L.6 14.500z" fill="none" stroke="#fff" stroke-width="1.200"/><path d="M5 8.500c0-3 4-4.500 6-1.500V4M10.500 7H8M5 12V9h2.500M5 10c2 2 4 1.500 5 0" fill="none" stroke="#fff"/><circle cx="12.500" cy="12.500" r="3.500" fill="#e8121d"/></svg>
    <svg width="15" height="12" viewBox="0 0 15 12"><path d="M.6 4h2L6 .8v10.400L2.600 8h-2zM9 4l5 5M14 4 9 9" fill="none" stroke="#fff" stroke-width="1.100"/></svg>
    <svg width="16" height="14" viewBox="0 0 16 14"><path d="M5 1.500h10.500V10H4V6M7 13h7M10 10v3M.6 1h4v3.500h-4zM2.500 4.500V9" fill="none" stroke="#fff" stroke-width="1.100"/></svg>
  </span>
  <span class="dt">8:19<br>25/09/2025</span>
  <span class="notif"><svg width="24" height="24" viewBox="0 0 24 24"><path d="M0 0h16v13H9l-4 4v-4H0z" fill="#fff"/><path d="M3 4h10M3 7h10M3 10h7" stroke="#222"/><circle cx="15.500" cy="15.500" r="8" fill="#333" stroke="#888"/><text x="15.500" y="20" text-anchor="middle" class="n2">2</text></svg></span>
  <i class="peek"></i>
</footer>
</body>
</html>
```
FILE: styles.css
```css
* { box-sizing: border-box; }
html, body { margin: 0; width: 1920px; height: 1040px; overflow: hidden; }
body { display: flex; flex-direction: column; background: #1a1a1a; color: #f2f2f2; font: 13px/16px "Liberation Sans", Arial, sans-serif; }
svg { flex: none; display: block; }
i, em { font-style: normal; }
.defs { position: absolute; }
.grow { flex: 1; }

/* browser toolbar */
.chrome { height: 47px; background: #3c3c3c; border-bottom: 1px solid #4a4a4a; display: flex; align-items: center; padding-left: 14px; color: #c8c8c8; font-family: "Open Sans", sans-serif; border-radius: 6px 6px 0 0; }
.chrome .nav { width: 16px; height: 16px; margin-right: 20px; }
.chrome .nav-fwd { color: #777; }
.chrome .nav-reload { margin-right: 18px; }
.omnibox { width: 1716px; height: 34px; border-radius: 17px; background: #282828; display: flex; align-items: center; padding-left: 5px; margin-right: 17px; }
.unsafe { width: 108px; height: 24px; border-radius: 12px; background: #3c3c3c; color: #f0a199; display: flex; align-items: center; padding-left: 8px; gap: 6px; font-size: 12px; }
.unsafe b { font-weight: 600; white-space: nowrap; letter-spacing: -0.3px; }
.url { font-size: 13.600px; margin-left: 8px; flex: 1; letter-spacing: -0.26px; }
.url s { color: #f0a199; }
.url em { color: #fff; }
.bookmark { width: 17px; height: 17px; margin: 0 16px 0 15px; }
.profile { margin-right: 26px; }

/* Proxmox header */
.pve { height: 953px; display: flex; flex-direction: column; }
.topbar { height: 34px; flex: none; display: flex; align-items: center; padding: 0 5px 0 6px; }
.logo { margin-right: 3px; overflow: visible; }
.brand { font: 800 20px Inter, sans-serif; fill: #fff; }
.or { fill: #e57000; }
.version { font-size: 14px; width: 170px; letter-spacing: 0.02px; white-space: nowrap; }
.search { width: 170px; height: 24px; line-height: 24px; padding-left: 7px; background: #333; color: #777; }
.topbtns { display: flex; gap: 6px; }
.btn { height: 24px; border-radius: 3px; border: 1px solid; display: flex; align-items: center; padding-left: 5px; white-space: nowrap; font-size: 12px; -webkit-text-stroke: 0.35px; }
.light { background: #a5a5a5; border-color: #b5b5b5; color: #1c1c1c; gap: 5px; -webkit-text-stroke: 0; }
.blue { background: #0060a8; border-color: #0060a8; color: #fff; gap: 5px; padding-left: 3px; }
.userb { width: 159px; background: #3b4645; border-color: #8fa5a3; color: #fff; gap: 7px; padding-left: 6px; }
.dark { background: #3a3a3a; border-color: #585858; color: #f0f0f0; gap: 6px; }
.dis { background: #2f2f2f; border-color: #424242; color: #8a8a8a; gap: 8px; }
.w57 { width: 57px; padding-left: 8px; gap: 8px; } .w66 { width: 66px; } .w68 { width: 68px; } .w83 { width: 83px; } .w85 { width: 85px; } .w93 { width: 93px; } .w98 { width: 98px; padding-left: 4px; } .w117 { width: 117px; }
.g8 { margin-right: 8px; } .g9 { margin-right: 9px; }
.vs { width: 1px; height: 18px; background: #666; }
.w93 .vs, .w98 .vs { margin-right: -2px; }
.btn .dd { color: #bbb; }

/* resource tree */
.main { height: 709px; flex: none; display: flex; padding: 0 5px; gap: 5px; }
.left { width: 300px; flex: none; display: flex; flex-direction: column; gap: 5px; }
.viewrow { display: flex; gap: 5px; height: 24px; flex: none; }
.combo { width: 271px; background: #333; display: flex; align-items: center; justify-content: space-between; padding: 0 7px; -webkit-text-stroke: 0.3px; }
.combo svg { color: #777; }
.gearbtn { width: 24px; background: #404040; border: 1px solid #5a5a5a; border-radius: 3px; display: flex; align-items: center; justify-content: center; }
.tree { flex: 1; background: #262626; padding-top: 1px; display: flex; flex-direction: column; overflow: hidden; }
.tr { height: 22px; flex: none; margin: 0 1px; display: flex; align-items: center; white-space: nowrap; overflow: hidden; }
.tr > span { padding-top: 1px; -webkit-text-stroke: 0.15px; }
.ar { color: #999; margin-right: 2px; }
.l0 { padding-left: 5px; } .l0 span { margin-left: 8px; }
.l1 { padding-left: 20px; } .l1 .ar { margin-right: 3px; } .l1 span { margin-left: 5px; }
.l2 { padding-left: 48px; } .l2 span { margin-left: 3px; }
.l1 svg:nth-child(2) { margin-left: 1px; }
.l2 svg { color: #e6e6e6; }
.l2 .off { color: #8a8a8a; }
.l2 .net { margin-right: 6px; }
.sel { background: #595959; }
.st { height: 22.5px; }
.tag { width: 12px; height: 12px; border-radius: 6px; background: #c1a8d0; margin-left: 5px; }
.usage { width: 8px; height: 16px; flex: none; border: 1px solid #e6e6e6; margin-left: 4px; background: linear-gradient(#e6e6e6, #e6e6e6) 1px 12px / 4px 1px no-repeat; }
.usage.half { background-position: 1px 6px; background-size: 4px 7px; }
.pool { padding-left: 31px; } .pool span { margin-left: 8px; }
.hscroll { height: 16px; margin-top: auto; display: flex; align-items: center; padding: 0 6px; background: #2b2b2b; }
.thumb { width: 244px; height: 9px; border-radius: 5px; background: #9d9d9d; margin: 0 25px 0 8px; }
.sl, .sr { border: 5px solid transparent; border-left-width: 0; border-right: 5px solid #9d9d9d; }
.sr { border-right-width: 0; border-left: 5px solid #9d9d9d; }

/* guest panel */
.content { width: 1605px; display: flex; flex-direction: column; background: #262626; }
.titlebar { height: 37px; flex: none; border-bottom: 1px solid #454545; display: flex; align-items: center; padding: 0 8px; }
.ttl { width: 387px; white-space: nowrap; -webkit-text-stroke: 0.3px; }
.notag { color: #9a9a9a; display: flex; gap: 3px; -webkit-text-stroke: 0.3px; align-items: center; }
.notag svg { color: #f0f0f0; }
.actions { display: flex; }
.body { flex: 1; display: flex; min-height: 0; }
.side { width: 170px; flex: none; border-right: 1px solid #454545; display: flex; flex-direction: column; gap: 5px; padding-top: 5px; }
.side a { height: 24px; display: flex; align-items: center; padding-left: 8px; -webkit-text-stroke: 0.1px; }
.side a svg { width: 16px; margin-right: 7px; }
.side .on { background: #0060a8; color: #fff; }
.sub { border: 5px solid transparent; border-left: 6px solid #ccc; border-right: 0; margin: 0 16px 0 auto; }
.console { flex: 1; display: flex; justify-content: space-between; background: #282828; padding-right: 180px; }
.handle { width: 15px; height: 50px; margin-top: 254px; background: #484848; box-shadow: 3px 3px 0 #1c1c1c; display: flex; align-items: center; padding-left: 5px; }
.handle i { border: 4px solid transparent; border-left: 5px solid #eee; border-right: 0; }

/* guest desktop, drawn at 84% of its own pixels */
.vm { width: 1075px; height: 672px; display: flex; flex-direction: column; background: #fff; overflow: hidden; }
.gnome { height: 27px; flex: none; background: #121212; display: flex; align-items: center; padding: 0 14px 1px 13px; font: 12px/14px "Open Sans", sans-serif; }
.ws { width: 24px; height: 7px; border-radius: 4px; background: #f5f5f5; margin-right: 5px; }
.ws2 { width: 5px; height: 5px; border-radius: 3px; background: #8a8a8a; }
.clock { margin-left: 475px; color: #e8e8e8; letter-spacing: -0.25px; white-space: nowrap; flex: 1; }
.sys { display: flex; gap: 11px; align-items: center; }
.desktop { flex: 1; display: flex; min-height: 0; }
.dock { width: 56px; flex: none; background: linear-gradient(#190f17, #28151f 60%, #1c1119); display: flex; flex-direction: column; align-items: center; padding-top: 3px; position: relative; border-right: 1px solid #777; }
.app { width: 51px; height: 50.500px; margin: 1.500px 0; border-radius: 9px; display: flex; align-items: center; justify-content: center; position: relative; flex: none; }
.active.app { background: #403641; }
.run { position: absolute; left: 0; top: 23px; width: 5px; height: 5px; border-radius: 3px; background: #de4a16; }
.dsep { width: 40px; height: 1px; background: #554c53; margin: 1px 0; flex: none; }
.ubuntu { background: #3a2b35; margin: auto 0 5px; }
.cursor { position: absolute; left: 6px; top: 593px; }
.ff { flex: 1; display: flex; flex-direction: column; color: #222; min-width: 0; }
.tabs { height: 37px; flex: none; background: #ebebeb; display: flex; align-items: center; font: 12px/14px "Open Sans", sans-serif; padding-right: 5px; }
.fview { width: 35px; height: 37px; display: flex; align-items: center; justify-content: center; border-right: 1px solid #ccc; padding-left: 1px; padding-right: 3px; }
.tab { width: 186px; height: 31px; margin-left: 4px; background: #fff; border-radius: 3px; box-shadow: 0 0 3px #999; display: flex; align-items: center; padding: 0 9px 0 10px; }
.tabt { margin: 0 3px 0 8px; width: 142px; white-space: nowrap; letter-spacing: -0.3px; -webkit-mask-image: linear-gradient(90deg, #000 82%, rgba(0,0,0,.35)); }
.plus { margin-left: 12px; }
.tabdd { margin-right: 41px; color: #333; }
.wb { width: 18px; height: 18px; border-radius: 9px; background: #d8d8d8; display: flex; align-items: center; justify-content: center; margin-left: 10.500px; }
.tools { height: 35px; flex: none; background: #fafafa; border-bottom: 1px solid #d0d0d0; display: flex; align-items: center; padding: 0 14px 0 13px; color: #3a3a3a; }
.t2 { margin: 0 16px; color: #aaa; } .t3 { margin-right: 83px; }
.furl { width: 647px; height: 27px; border-radius: 3px; background: #ededed; display: flex; align-items: center; font: 12.400px/16px "Open Sans", sans-serif; color: #8a8a8a; padding: 0 6px 0 6px; gap: 11px; }
.furl em { color: #222; } .fst { color: #444; }
.tr4 { display: flex; align-items: center; gap: 18px; }

/* documentation page */
.page { flex: 1; background: #fff; position: relative; display: flex; padding: 0 12px 0 8px; min-height: 0; overflow: hidden; font-family: "Liberation Sans", Arial, sans-serif; color: #405871; }
.toggle { width: 9px; height: 10px; background: #405871; margin: 52px 8px 0 0; display: flex; align-items: center; justify-content: center; }
.toggle b { border: 4px solid transparent; border-left: 0; border-right: 4px solid #fff; }
.doc { width: 982px; position: relative; flex: none; font-size: 11.760px; }
.doc a { color: #0f78c6; text-decoration: underline; text-decoration-thickness: 1px; text-underline-offset: 1px; }
.mods { height: 44px; padding-top: 24px; text-align: right; font-size: 10.920px; white-space: nowrap; }
.band { height: 24px; background: #405871; color: #fff; font: bold 13.440px/24px "Liberation Sans", sans-serif; padding-left: 474px; }
.alogo { position: absolute; left: 29px; top: 6px; overflow: visible; }
.ap1 { font: 700 36px Lato, sans-serif; fill: #d22128; }
.ap2 { font: 500 15px Lato, sans-serif; fill: #fff; stroke: #fff; stroke-width: .2px; }
.crumbs { height: 30px; padding-top: 2px; font-size: 10.920px; }
.doc h1 { margin: 0; height: 29px; border: 1px solid #405871; border-top-color: #8ea0b3; padding-left: 4px; font: bold 18.480px/27px "Liberation Sans", sans-serif; color: #036; }
.langs { height: 29px; padding-top: 2px; margin-right: 5px; display: flex; justify-content: flex-end; font-size: 10.920px; }
.langs b { color: #0f78c6; margin-left: 7.400px; }
.langs i { width: 1px; height: 10px; margin: 4px 0 0 7px; background: #ccc; }
.goog { height: 31px; display: flex; justify-content: center; gap: 3px; }
.gin { width: 152px; height: 19px; border: 1px solid #8f8f9d; border-radius: 2px; }
.gbt { width: 103px; height: 19px; border: 1px solid #8f8f9d; border-radius: 3px; background: #e9e9ed; color: #222; font: 11.500px/17px "Open Sans", sans-serif; text-align: center; white-space: nowrap; letter-spacing: -0.1px; }
.cols { display: grid; grid-template-columns: 325px 323px 325px; gap: 4.500px; }
.col.mid { border: solid #aaa; border-width: 0 1px; margin: 0 -3px; padding: 0 3px; min-height: 400px; }
.doc h2 { margin: 0; height: 20px; background: #e5ecf3; padding-left: 7.500px; font: bold 11.760px/20px "Liberation Sans", sans-serif; color: #405871; }
.doc ul { list-style: none; margin: 0; padding: 4.600px 0 9.100px 5.700px; }
.doc li { height: 18.816px; line-height: 18.816px; white-space: nowrap; }
.tip { position: absolute; left: 2px; top: 532px; width: 138px; height: 27px; border-radius: 14px; background: #202020; color: #d8d8d8; font: 12px/26px "Open Sans", sans-serif; text-align: center; }

/* task log */
.split { height: 5px; flex: none; background: #0c0c0c; display: flex; justify-content: center; }
.grip { width: 48px; height: 5px; background: #555; display: flex; justify-content: center; }
.grip b { width: 0; height: 0; border: 4px solid transparent; border-top-color: #111; }
.log { height: 200px; flex: none; margin: 0 5px; background: #262626; border: 1px solid #404040; border-top: 0; }
.ltabs { height: 35px; padding: 6px 0 0 10px; display: flex; -webkit-text-stroke: 0.3px; }
.lt { height: 23px; line-height: 23px; padding: 0 7px; border-radius: 2px; margin-right: 11px; }
.lt.on { background: #0078d4; }
.lr { display: grid; grid-template-columns: 150px 150px 100px 150px 1128px 200px 31px; border-bottom: 1px solid #404040; align-items: stretch; }
.lr span { padding-left: 10px; white-space: nowrap; overflow: hidden; }
.head { height: 32px; border-top: 1px solid #404040; border-bottom-width: 2px; line-height: 28px; -webkit-text-stroke: 0.3px; }
.head span { border-right: 1px solid #404040; }
.head .sorted { background: #1e384c; display: flex; align-items: center; gap: 4px; }
.row { height: 25px; line-height: 24px; }
.row span { -webkit-text-stroke: 0.1px; }
.alt { background: #1a1a1a; }
.mon svg { margin: 4px 0 0 57px; }
.go svg { margin-top: 4px; }

/* Windows taskbar */
.taskbar { height: 40px; background: linear-gradient(90deg, #1f2328, #33251f 30%, #262322 60%, #241f25 85%, #1b241d); display: flex; align-items: center; font: 14px/18px "Open Sans", sans-serif; }
.start { width: 48px; padding-left: 16px; }
.wsearch { width: 288px; height: 40px; background: #f2f2f2; border: 1px solid #bbb; display: flex; align-items: center; padding-left: 11px; gap: 11px; color: #333; letter-spacing: -0.1px; }
.pic { margin-left: auto; margin-right: 12px; }
.ti { width: 49px; height: 40px; display: flex; align-items: center; justify-content: center; border-bottom: 2px solid transparent; padding-top: 2px; }
.tview { width: 50px; padding-right: 2px; }
.ti.active { width: 48px; background: #515155; margin-left: 1px; }
.ti.open { border-bottom-color: #76b9ed; }
.ti.w60 { width: 40px; margin: 0 4px 0 5px; }
.wx { margin: 0 26px 0 8px; letter-spacing: -0.2px; width: 62px; white-space: nowrap; font-size: 13.500px; }
.tray { display: flex; gap: 9px; align-items: center; }
.dt { width: 78px; text-align: center; font-size: 12px; line-height: 17.500px; letter-spacing: -0.3px; }
.notif { margin-left: 8px; width: 35px; }
.n2 { font: bold 12px "Open Sans", sans-serif; fill: #fff; }
.peek { width: 5px; height: 40px; border-left: 1px solid #777; }
```
